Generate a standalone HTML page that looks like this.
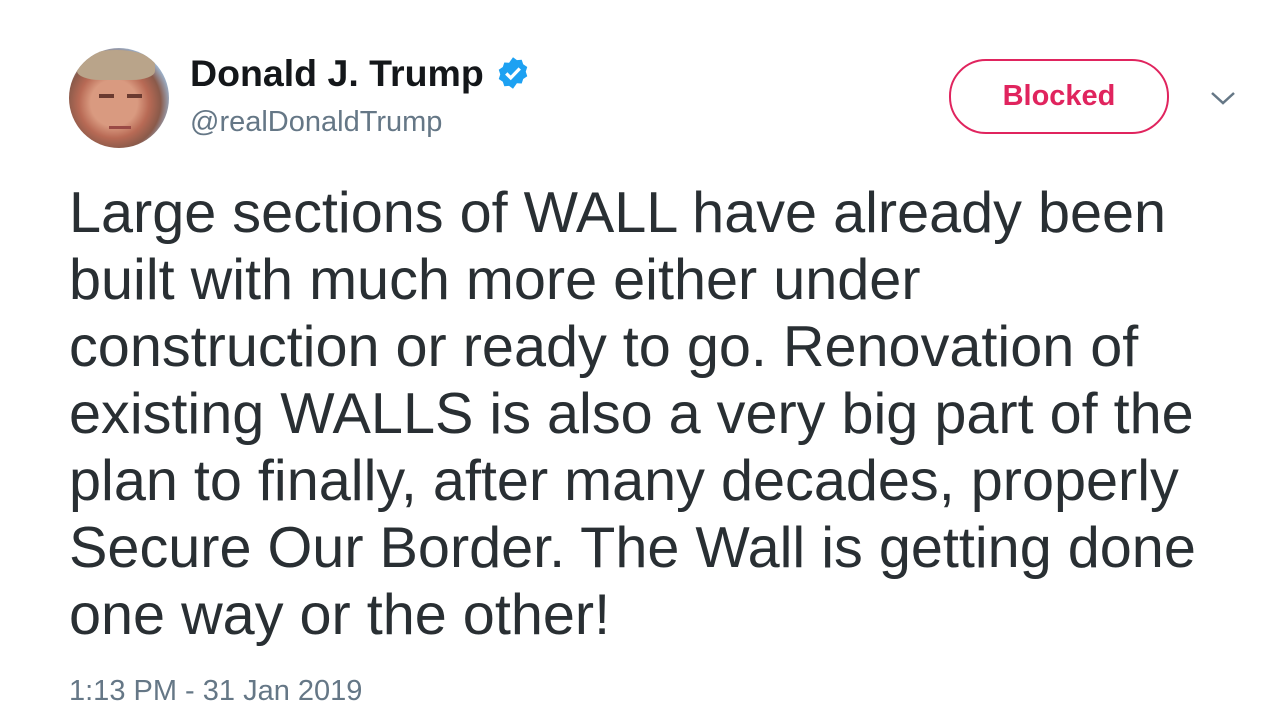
<!DOCTYPE html><html><head><style>
body{margin:0;width:1267px;height:718px;background:#fff;font-family:"Liberation Sans",sans-serif;position:relative;overflow:hidden}
.a{position:absolute}
</style></head><body>
<div class="a" style="left:69px;top:48px;width:100px;height:100px;border-radius:50%;overflow:hidden;background:radial-gradient(circle at 45% 55%,#d99a80 0 30%,#b86a55 45%,#8a5a4a 60%,#9fc0e0 75%)">
<div class="a" style="left:8px;top:2px;width:78px;height:30px;border-radius:50% 50% 30% 30%;background:#b9a48a"></div>
<div class="a" style="left:30px;top:46px;width:15px;height:4px;background:#6a3a30"></div>
<div class="a" style="left:58px;top:46px;width:15px;height:4px;background:#6a3a30"></div>
<div class="a" style="left:40px;top:78px;width:22px;height:3px;background:#9a4a45"></div>
</div>
<div class="a" style="left:190px;top:52px;font-size:37.5px;font-weight:bold;color:#14171a">Donald J. Trump</div>
<svg class="a" style="left:495px;top:55px" width="36" height="36" viewBox="0 0 24 24"><path fill="#1da1f2" d="M12 1.5l2.6 1.9 3.2-.2 1 3 2.7 1.8-1 3.1 1 3.1-2.7 1.8-1 3-3.2-.2L12 22.5l-2.6-1.9-3.2.2-1-3-2.7-1.8 1-3.1-1-3.1 2.7-1.8 1-3 3.2.2z"/><path d="M7.5 12.3l3 3 6-6.3" stroke="#fff" stroke-width="2.2" fill="none"/></svg>
<div class="a" style="left:190px;top:106px;font-size:29px;color:#657786">@realDonaldTrump</div>
<div class="a" style="left:949px;top:59px;width:216px;height:71px;border:2px solid #e0245e;border-radius:37px;color:#e0245e;font-weight:bold;font-size:29px;text-align:center;line-height:71px">Blocked</div>
<svg class="a" style="left:1210px;top:90px" width="26" height="16"><path d="M2 3l11 10 11-10" stroke="#657786" stroke-width="2.5" fill="none"/></svg>
<div class="a" style="left:69px;top:180px;width:1195px;font-size:57.6px;line-height:67px;color:#292f33">Large sections of WALL have already been<br>built with much more either under<br>construction or ready to go. Renovation of<br>existing WALLS is also a very big part of the<br>plan to finally, after many decades, properly<br>Secure Our Border. The Wall is getting done<br>one way or the other!</div>
<div class="a" style="left:69px;top:675px;font-size:29px;color:#657786">1:13 PM - 31 Jan 2019</div>
</body></html>
